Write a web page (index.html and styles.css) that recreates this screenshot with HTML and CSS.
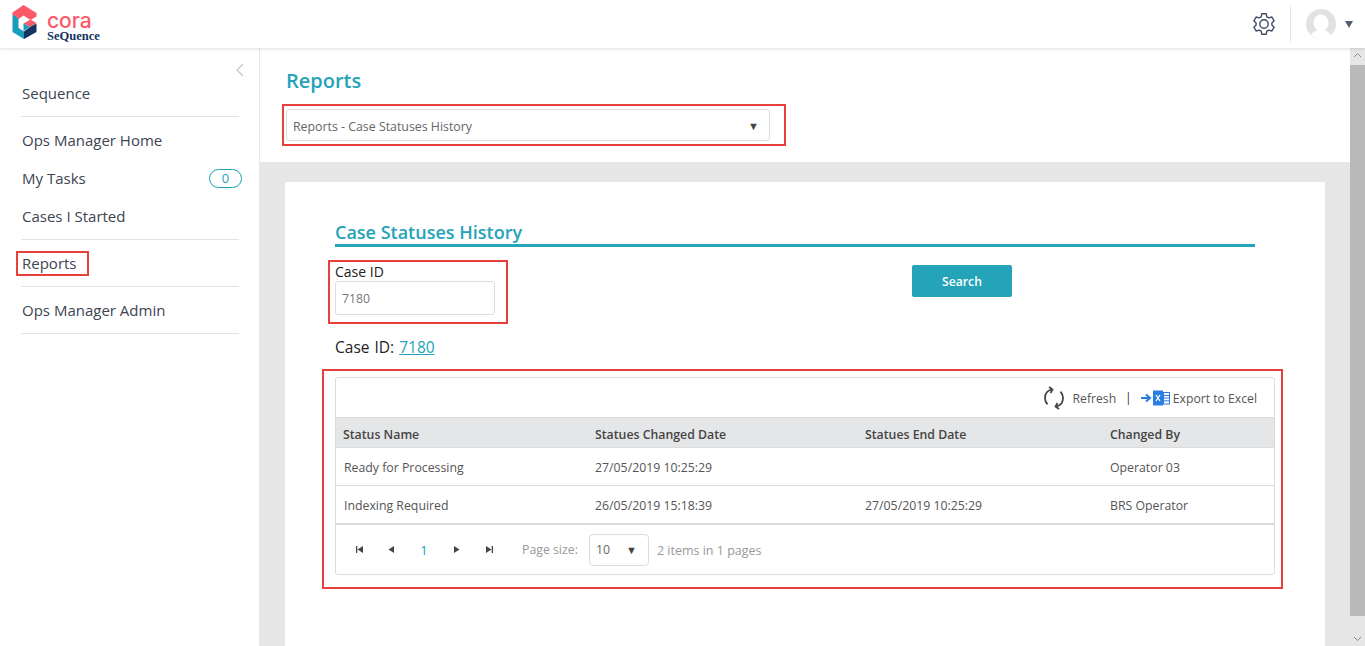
FILE: index.html
```html
<!DOCTYPE html>
<html lang="en">
<head>
<meta charset="utf-8">
<title>Reports</title>
<link rel="stylesheet" href="styles.css">
</head>
<body>
<header class="topbar">
  <div class="brand">
    <svg class="logo" width="25" height="36" viewBox="0 0 25 36">
      <polygon points="11.500,1 24.500,9 24.500,12.500 18.500,16 11.500,11.500 6.500,15 0.500,11 0.500,8.500" fill="#fb5a68"/>
      <polygon points="0.500,10.500 6.500,14.500 6.500,24 12,27.500 12,35 0.500,28" fill="#1a9dbb"/>
      <polygon points="11.500,19.500 18.500,15.500 24.500,19 18,23" fill="#fb5a68"/>
      <polygon points="12,27.500 18,23 24.500,19.500 24.500,28 12,35" fill="#12345f"/>
      <polygon points="11.500,19.500 18,23 11.500,27" fill="#1a9dbb"/>
    </svg>
    <div class="brand-text">
      <span class="brand-cora">cora</span>
      <span class="brand-seq">SeQuence</span>
    </div>
  </div>
  <div class="top-actions">
    <svg class="gear" width="24" height="24" viewBox="0 0 24 24" fill="none" stroke="#3e4a63" stroke-width="1.400" stroke-linejoin="round">
      <path d="M9.800 1.800h4.400l.7 3 2 1.100 3-.9 2.200 3.800-2.200 2.100v2.200l2.200 2.100-2.200 3.800-3-.9-2 1.100-.7 3H9.800l-.7-3-2-1.100-3 .9-2.200-3.800 2.200-2.100v-2.200L1.900 8.800 4.100 5l3 .9 2-1.100z"/>
      <circle cx="12" cy="12" r="4.200"/>
    </svg>
    <span class="top-sep"></span>
    <svg class="avatar" width="30" height="30" viewBox="0 0 30 30">
      <circle cx="15" cy="15" r="15" fill="#e2e2e2"/>
      <ellipse cx="15" cy="14" rx="7.500" ry="8.500" fill="#fff"/>
      <path d="M5 26c3-4 6-5 10-5s7 1 10 5c-3 2.500-6 4-10 4s-7-1.500-10-4z" fill="#fff"/>
    </svg>
    <svg class="caret-user" width="8" height="7" viewBox="0 0 8 7"><path d="M0 0h8L4 7z" fill="#555e70"/></svg>
  </div>
</header>

<div class="shell">
  <aside class="sidebar">
    <div class="collapse">
      <svg width="9" height="14" viewBox="0 0 9 14" fill="none" stroke="#c4c4c4" stroke-width="1.200"><path d="M8 1 2 7l6 6"/></svg>
    </div>
    <nav>
      <ul class="nav-group">
        <li class="nav-item">Sequence</li>
      </ul>
      <ul class="nav-group">
        <li class="nav-item">Ops Manager Home</li>
        <li class="nav-item">My Tasks <span class="badge">0</span></li>
        <li class="nav-item">Cases I Started</li>
      </ul>
      <ul class="nav-group">
        <li class="nav-item"><span class="mark-nav">Reports</span></li>
      </ul>
      <ul class="nav-group">
        <li class="nav-item">Ops Manager Admin</li>
      </ul>
    </nav>
  </aside>

  <main class="main">
    <section class="page-head">
      <h1 class="page-title">Reports</h1>
      <div class="mark mark-select">
        <div class="select-box">
          <span class="select-text">Reports - Case Statuses History</span>
          <span class="select-caret">▼</span>
        </div>
      </div>
    </section>

    <section class="content">
      <div class="card">
        <h2 class="card-title">Case Statuses History</h2>
        <div class="search-row">
          <div class="mark mark-case">
            <label class="case-label">Case ID</label>
            <div class="case-input">7180</div>
          </div>
          <button class="search-btn">Search</button>
        </div>
        <p class="case-line">Case ID: <a class="case-link">7180</a></p>

        <div class="mark mark-grid">
          <div class="grid">
            <div class="toolbar">
              <svg class="refresh" width="22" height="24" viewBox="0 0 22 24" fill="none" stroke="#444" stroke-width="1.800">
                <path d="M8.500 3.500C4.500 4.500 2 8 2 12c0 2.500 1 4.700 2.500 6.300"/>
                <path d="M6 1 9.500 3.500 7.500 7"/>
                <path d="M13.500 20.500c4-1 6.500-4.500 6.500-8.500 0-2.500-1-4.700-2.500-6.300"/>
                <path d="M16 23l-3.500-2.500 2-3.500"/>
              </svg>
              <span class="tool-text">Refresh</span>
              <span class="tool-sep">|</span>
              <svg class="excel" width="29" height="16" viewBox="0 0 29 16">
                <path d="M0 8h8" stroke="#2a7de1" stroke-width="2" fill="none"/>
                <path d="M5 4.500 9 8l-4 3.500" stroke="#2a7de1" stroke-width="2" fill="none"/>
                <rect x="12" y="0.500" width="10" height="15" fill="#2a7de1"/>
                <rect x="22.500" y="2.500" width="6" height="11.500" fill="#fff" stroke="#2a7de1"/>
                <path d="M22.500 5.500h6M22.500 8h6M22.500 10.800h6" stroke="#2a7de1"/>
                <path d="M15 5l4 6M19 5l-4 6" stroke="#fff" stroke-width="1.300"/>
              </svg>
              <span class="tool-text">Export to Excel</span>
            </div>
            <table class="table">
              <thead>
                <tr><th class="col-a">Status Name</th><th class="col-b">Statues Changed Date</th><th class="col-c">Statues End Date</th><th class="col-d">Changed By</th></tr>
              </thead>
              <tbody>
                <tr><td>Ready for Processing</td><td>27/05/2019 10:25:29</td><td></td><td>Operator 03</td></tr>
                <tr><td>Indexing Required</td><td>26/05/2019 15:18:39</td><td>27/05/2019 10:25:29</td><td>BRS Operator</td></tr>
              </tbody>
            </table>
            <div class="pager">
              <svg class="pg" width="9" height="9" viewBox="0 0 9 9"><path d="M1 1h1.300v7H1zM8 1v7L2.500 4.500z" fill="#444"/></svg>
              <svg class="pg" width="9" height="9" viewBox="0 0 9 9"><path d="M7 1v7L1.500 4.500z" fill="#444"/></svg>
              <span class="pg-num">1</span>
              <svg class="pg" width="9" height="9" viewBox="0 0 9 9"><path d="M2 1v7l5.500-3.500z" fill="#444"/></svg>
              <svg class="pg" width="9" height="9" viewBox="0 0 9 9"><path d="M1 1v7l5.500-3.500zM6.700 1H8v7H6.700z" fill="#444"/></svg>
              <span class="pg-label">Page size:</span>
              <div class="pg-size"><span>10</span><span class="pg-caret">▼</span></div>
              <span class="pg-info">2 items in 1 pages</span>
            </div>
          </div>
        </div>
      </div>
    </section>
  </main>

  <div class="scrollbar">
    <svg width="15" height="14" viewBox="0 0 15 14" fill="none" stroke="#8a8a8a"><path d="M4 9l3.500-3.500L11 9"/></svg>
    <div class="thumb"></div>
    <svg class="scroll-down" width="15" height="14" viewBox="0 0 15 14" fill="none" stroke="#8a8a8a"><path d="M4 5l3.500 3.500L11 5"/></svg>
  </div>
</div>
</body>
</html>
```

FILE: styles.css
```css
* { box-sizing: border-box; }
html, body { margin: 0; height: 100%; overflow: hidden; }
body { font-family: "Open Sans", sans-serif; color: #333; background: #fff; font-size: 14px; }

.topbar { height: 48px; display: flex; align-items: center; justify-content: space-between; background: #fff; box-shadow: 0 1px 3px rgba(0,0,0,.13); position: relative; z-index: 2; padding-left: 12px; }
.brand { display: flex; align-items: flex-start; gap: 10px; height: 40px; }
.logo { display: block; }
.brand-text { display: flex; flex-direction: column; padding-top: 6px; }
.brand-cora { font-family: "Inter", sans-serif; font-weight: 500; font-size: 21px; line-height: 21px; color: #fb5a68; }
.brand-seq { font-family: "Liberation Serif", serif; font-weight: 700; font-size: 12.500px; line-height: 10px; color: #12345f; }
.top-actions { display: flex; align-items: center; height: 48px; padding-right: 12px; }
.gear { margin-right: 14px; }
.top-sep { width: 1px; height: 36px; background: #e6e6e6; margin-right: 15px; }
.caret-user { margin-left: 9px; }

.shell { display: flex; height: 598px; }
.sidebar { width: 260px; flex: none; background: #fff; border-right: 1px solid #e8e8e8; padding: 0 21px; position: relative; }
.collapse { position: absolute; top: 14px; right: 15px; }
nav { padding-top: 26px; width: 218px; }
.nav-group { list-style: none; margin: 0; padding: 0 0 4px; border-bottom: 1px solid #e3e3e3; }
.nav-group + .nav-group { padding-top: 4px; }
.nav-item { height: 38px; line-height: 38px; font-size: 15px; color: #3d4452; padding-left: 1px; display: flex; justify-content: space-between; align-items: center; }
.badge { width: 33px; height: 19px; margin-right: -3px; border: 1px solid #1e9fb8; border-radius: 10px; color: #1e9fb8; font-size: 13px; line-height: 17px; text-align: center; }
.mark-nav { border: 2px solid #e8403c; padding: 0 10px 0 4px; margin-left: -6px; height: 25px; line-height: 20px; }

.main { width: 1090px; flex: none; display: flex; flex-direction: column; }
.page-head { height: 114px; background: #fff; padding: 19px 0 0 22px; flex: none; }
.page-title { margin: 0 0 10px 4px; font-size: 20px; line-height: 27px; font-weight: 600; color: #24a3b9; }
.mark { border: 2px solid #e8403c; }
.mark-select { width: 504px; height: 42px; padding: 3px 2px; }
.select-box { width: 484px; height: 32px; border: 1px solid #dcdcdc; border-radius: 3px; display: flex; justify-content: space-between; align-items: center; padding: 0 10px 0 6px; font-size: 12.350px; color: #666; }
.select-text { padding-top: 2px; }
.select-caret { font-size: 11px; color: #444; }
.content { flex: 1; background: #e6e6e6; padding: 20px 25px 0; }
.card { background: #fff; height: 100%; padding: 38px 50px 0; }
.card-title { margin: 0; height: 27px; width: 920px; font-size: 18px; line-height: 24px; font-weight: 600; color: #24a3b9; border-bottom: 3px solid #24a3b9; }
.search-row { display: flex; align-items: flex-start; margin-top: 13px; }
.mark-case { width: 180px; height: 64px; margin-left: -7px; padding: 0 5px; }
.case-label { display: block; font-size: 14px; line-height: 19px; color: #222; }
.case-input { width: 160px; height: 34px; border: 1px solid #dcdcdc; border-radius: 3px; font-size: 12.300px; line-height: 32px; padding: 1px 0 0 6px; color: #777; }
.search-btn { margin: 5px 0 0 404px; width: 100px; height: 32px; background: #24a3b9; color: #fff; border: 0; border-radius: 2px; font: 600 12.200px "Open Sans", sans-serif; }
.case-line { margin: 13px 0 0; font-size: 15.500px; line-height: 20px; color: #222; word-spacing: 1px; }
.case-link { color: #24a3b9; text-decoration: underline; }
.mark-grid { width: 961px; height: 220px; margin: 12px 0 0 -13px; padding: 6px 7px 0 11px; }
.grid { width: 940px; height: 198px; border: 1px solid #dcdcdc; border-radius: 3px; }
.toolbar { height: 40px; display: flex; align-items: center; justify-content: flex-end; padding-right: 17px; font-size: 12.200px; color: #555; border-bottom: 1px solid #dcdcdc; }
.refresh { margin-right: 8px; }
.tool-text { color: #555; padding-top: 1px; }
.tool-sep { margin: 0 9px; color: #333; }
.excel { margin-right: 3px; }
.table { width: 938px; border-collapse: separate; border-spacing: 0; table-layout: fixed; font-size: 12.300px; color: #555; }
.table th { height: 30px; background: #e5e6e8; text-align: left; font-weight: 600; padding: 4px 0 0 8px; color: #444; border-bottom: 1px solid #dcdcdc; }
.table td { height: 38px; padding: 1px 0 0 8px; border-bottom: 1px solid #dcdcdc; }
.table tbody tr:last-child td { height: 39px; border-bottom-width: 2px; }
.table .col-a { width: 251px; padding-left: 7px; }
.col-b { width: 270px; }
.col-c { width: 245px; }
.pager { height: 49px; display: flex; align-items: center; padding-left: 19px; font-size: 12.300px; color: #999; }
.pg { margin-right: 23px; }
.pg-num { color: #0e9fbd; font-size: 13px; width: 10px; margin: 0 23px 0 0; text-align: center; }
.pg-num + .pg { margin-right: 24px; }
.pg-label { margin-left: 5px; }
.pg-size { width: 60px; height: 32px; margin-left: 11px; border: 1px solid #dcdcdc; border-radius: 4px; display: flex; justify-content: space-between; align-items: center; padding: 0 11px 0 6px; color: #666; }
.pg-caret { font-size: 11px; color: #444; }
.pg-info { margin-left: 8px; padding-top: 2px; font-size: 12.500px; }

.scrollbar { width: 15px; flex: none; background: #e6e6e6; display: flex; flex-direction: column; }
.thumb { height: 551px; background: #b9b9b9; margin-top: 3px; }
.scroll-down { margin-top: 16px; }
```
